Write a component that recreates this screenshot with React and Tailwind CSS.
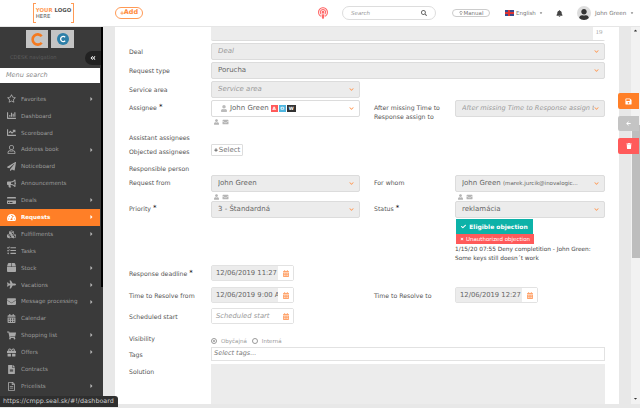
import {
  FaRegStar, FaChartBar, FaChartLine, FaRegUser, FaPaperPlane, FaBullhorn, FaCreditCard,
  FaTachometerAlt, FaCubes, FaTasks, FaBox, FaPlane, FaEnvelope, FaCalendarAlt, FaShoppingCart,
  FaGift, FaFileAlt, FaRegFileAlt, FaCaretRight, FaCaretDown, FaCaretUp, FaSearch, FaBell, FaUser,
  FaChevronDown, FaSave, FaArrowLeft, FaTrash, FaPlus, FaCheck, FaTimes, FaAngleDoubleLeft,
  FaRegLightbulb, FaPodcast,
} from 'react-icons/fa'

const MENU = [
  { label: 'Favorites', icon: FaRegStar, more: true },
  { label: 'Dashboard', icon: FaChartBar },
  { label: 'Scoreboard', icon: FaChartLine },
  { label: 'Address book', icon: FaRegUser, more: true },
  { label: 'Noticeboard', icon: FaPaperPlane },
  { label: 'Announcements', icon: FaBullhorn },
  { label: 'Deals', icon: FaCreditCard, more: true },
  { label: 'Requests', icon: FaTachometerAlt, more: true, active: true },
  { label: 'Fulfillments', icon: FaCubes, more: true },
  { label: 'Tasks', icon: FaTasks },
  { label: 'Stock', icon: FaBox, more: true },
  { label: 'Vacations', icon: FaPlane, more: true },
  { label: 'Message processing', icon: FaEnvelope, more: true },
  { label: 'Calendar', icon: FaCalendarAlt },
  { label: 'Shopping list', icon: FaShoppingCart, more: true },
  { label: 'Offers', icon: FaGift, more: true },
  { label: 'Contracts', icon: FaFileAlt },
  { label: 'Pricelists', icon: FaRegFileAlt, more: true },
]

function MenuItem({ item }) {
  const Icon = item.icon
  return (
    <div className={`h-[16.9px] flex items-center pl-[7px] pr-[6px] text-[5.6px] ${item.active ? 'bg-[#ff7f27] text-white font-semibold' : 'text-[#9c9c9c]'}`}>
      <Icon className={`w-[9px] h-[9px] mr-[5px] shrink-0 ${item.active ? 'text-white' : 'text-[#a8a8a8]'}`} />
      <span className="flex-1 truncate">{item.label}</span>
      {item.more && <FaCaretRight className={`w-[5px] h-[6px] ${item.active ? 'text-white' : 'text-[#b5b5b5]'}`} />}
    </div>
  )
}

function Field({ children, placeholder, className = 'w-[149px]', white }) {
  return (
    <div className={`h-[17px] shrink-0 flex items-center pl-[6px] pr-[5px] rounded-[2px] border border-[#dcdcdc] text-[7px] ${white ? 'bg-white' : 'bg-[#ececec]'} text-[#666] ${className}`}>
      <span className={`flex-1 min-w-0 overflow-hidden whitespace-nowrap ${placeholder ? 'italic text-[#9a9a9a]' : ''}`}>{placeholder || children}</span>
      <FaChevronDown className="w-[5px] h-[5px] text-[#ff9a55] shrink-0" />
    </div>
  )
}

function PersonIcons() {
  return (
    <div className="flex items-center gap-[3px] pl-[3px] mt-[1px] h-[7px] text-[#b5b5b5]">
      <FaUser className="w-[5px] h-[6px]" />
      <FaEnvelope className="w-[7px] h-[6px]" />
    </div>
  )
}

function Label({ children, req, className = 'w-[82px]' }) {
  return (
    <div className={`shrink-0 text-[6.2px] leading-[9px] text-[#555] ${className}`}>
      {children}
      {req && <span className="text-[7px] text-black align-top ml-[2px]">*</span>}
    </div>
  )
}

function DateField({ value, placeholder, className = 'w-[83px]' }) {
  return (
    <div className={`flex h-[16px] shrink-0 border border-[#e2e2e2] rounded-[2px] ${className}`}>
      <div className={`flex-1 min-w-0 overflow-hidden whitespace-nowrap flex items-center pl-[4px] text-[6.8px] ${placeholder ? 'italic text-[#9a9a9a] bg-white' : 'bg-[#ececec] text-[#666]'}`}>
        {placeholder || value}
      </div>
      <div className="w-[15px] flex items-center justify-center bg-white">
        <FaCalendarAlt className="w-[6px] h-[7px] text-[#ffa36b]" />
      </div>
    </div>
  )
}

function Badge({ className, children }) {
  return <span className={`h-[7px] text-white text-[4.5px] font-bold text-center leading-[7px] ${className}`}>{children}</span>
}

export default function App() {
  return (
    <div className="relative w-[640px] h-[408px] overflow-hidden flex flex-col bg-[#e8e8e8] font-['DejaVu_Sans',sans-serif]">
      <header className="h-[27px] shrink-0 flex items-center bg-white border-b border-[#e6e6e6]">
        <div className="ml-[33px] w-[41px] h-[20px] shrink-0 flex">
          <div className="w-[3px] border-l border-y border-[#ff9a55]" />
          <div className="flex-1 text-[5.4px] leading-[6.5px] flex flex-col justify-center text-[#555] font-bold whitespace-nowrap">
            <div><span className="text-[#ff9a55]">YOUR</span> LOGO</div>
            <div className="font-normal">HERE</div>
          </div>
          <div className="w-[3px] border-r border-y border-[#ff9a55]" />
        </div>
        <div className="ml-[41px] w-[28px] h-[12px] shrink-0 flex items-center justify-center border border-[#ff9a55] rounded-full text-[6.5px] font-bold text-[#ff8a3d]">
          <FaPlus className="w-[4px] h-[4px]" />Add
        </div>
        <FaPodcast className="ml-[175px] w-[10px] h-[12px] shrink-0 text-[#ff6b6b]" />
        <div className="ml-[14px] w-[94px] h-[14px] shrink-0 flex items-center px-[8px] border border-[#ddd] rounded-full italic text-[5.5px] text-[#999]">
          <span className="flex-1">Search</span>
          <FaSearch className="w-[6px] h-[6px] text-[#666]" />
        </div>
        <div className="ml-[16px] w-[38px] h-[8px] shrink-0 flex items-center justify-center gap-[1px] border border-[#ccc] rounded-full text-[5.5px] text-[#777]">
          <FaRegLightbulb className="w-[4px] h-[4px]" />Manual
        </div>
        <div className="ml-[15px] w-[9px] h-[6px] shrink-0 bg-[#3b4a8c] relative overflow-hidden">
          <div className="absolute left-0 right-0 top-[2px] h-[2px] bg-[#d33]" />
          <div className="absolute top-0 bottom-0 left-[3px] w-[2px] bg-[#d33]" />
        </div>
        <span className="ml-[2px] w-[22px] shrink-0 text-[5.5px] text-[#777]">English</span>
        <FaCaretDown className="ml-[1px] w-[4px] h-[4px] shrink-0 text-[#555]" />
        <FaBell className="ml-[13px] w-[7px] h-[7px] shrink-0 text-[#444]" />
        <div className="ml-[14px] w-[14px] h-[14px] shrink-0 rounded-full bg-[#ddd] flex items-end justify-center overflow-hidden">
          <FaUser className="w-[10px] h-[11px] text-[#333]" />
        </div>
        <span className="ml-[4px] w-[33px] shrink-0 whitespace-nowrap text-[5.7px] text-[#777]">John Green</span>
        <FaCaretDown className="ml-[2px] w-[4px] h-[4px] shrink-0 text-[#555]" />
      </header>

      <div className="flex-1 min-h-0 flex">
        <aside className="relative w-[103px] shrink-0 bg-[#3a3a3a]">
          <div className="absolute right-0 top-0 w-[2px] h-[260px] bg-black" />
          <div className="flex gap-[3px] pl-[26px] pt-[3px]">
            <div className="w-[22px] h-[18px] bg-[#c4c4c4] flex items-center justify-center">
              <svg viewBox="0 0 14 14" className="w-[13px] h-[13px]">
                <path d="M11.5 3.5 A5.5 5.5 0 1 0 11.5 10.5" fill="none" stroke="#f47a20" strokeWidth="2.8" />
              </svg>
            </div>
            <div className="w-[23px] h-[18px] bg-[#c4c4c4] flex items-center justify-center">
              <svg viewBox="0 0 14 14" className="w-[12px] h-[12px]">
                <circle cx="7" cy="7" r="7" fill="#2d7fa8" />
                <path d="M9.5 5 A3 3 0 1 0 9.5 9" fill="none" stroke="#fff" strokeWidth="1.5" />
              </svg>
            </div>
          </div>
          <div className="h-[14px] mt-[3px] relative flex items-center pl-[10px] text-[5.2px] text-[#5c5c5c]">
            CDESK navigation
            <div className="absolute left-[85px] top-0 w-[16px] h-[14px] rounded-l-full bg-[#222] flex items-center justify-center">
              <FaAngleDoubleLeft className="w-[6px] h-[6px] text-white" />
            </div>
          </div>
          <div className="mt-[3px] w-[100px] h-[15px] bg-white flex items-center pl-[6px] italic text-[6.5px] text-[#888]">Menu search</div>
          <div className="mt-[7.5px] w-[100px]">
            {MENU.map(item => <MenuItem key={item.label} item={item} />)}
          </div>
        </aside>

        <div className="w-[12px] shrink-0" />

        <main className="w-[504px] shrink-0 bg-white pl-[14px] pr-[14px] overflow-hidden">
          <div className="ml-[82px] h-[14px] flex justify-end bg-[#ececec] border-b border-[#dcdcdc] rounded-b-[2px]">
            <div className="w-[12px] bg-white text-[7px] text-[#aaa] text-center font-['Liberation_Serif',serif]">19</div>
          </div>
          <div className="mt-[2px] flex items-center h-[17px]"><Label>Deal</Label><Field placeholder="Deal" className="flex-1" /></div>
          <div className="mt-[2px] flex items-center h-[17px]"><Label>Request type</Label><Field className="flex-1">Porucha</Field></div>
          <div className="mt-[2px] flex items-center h-[17px]"><Label>Service area</Label><Field placeholder="Service area" /></div>

          <div className="mt-[2px] flex h-[25px]">
            <Label req className="w-[82px] pt-[3px]">Assignee</Label>
            <div>
              <Field white>
                <span className="flex items-center">
                  <FaUser className="w-[6px] h-[7px] mx-[3px] text-[#bbb]" />
                  John Green
                  <Badge className="ml-[2px] mr-[1px] w-[7px] bg-[#ff5a5a]">A</Badge>
                  <Badge className="mr-[1px] w-[7px] bg-[#4fb6e0]">O</Badge>
                  <Badge className="w-[9px] bg-[#333]">W</Badge>
                </span>
              </Field>
              <PersonIcons />
            </div>
            <Label className="ml-[14px] w-[81px] pt-[3px]">After missing Time to Response assign to</Label>
            <Field placeholder="After missing Time to Response assign to" className="w-[150px] !text-[6.6px]" />
          </div>

          <div className="mt-[8px] h-[9px]"><Label>Assistant assignees</Label></div>
          <div className="mt-[2px] h-[12px] flex">
            <Label className="w-[82px] pt-[3px]">Objected assignees</Label>
            <div className="w-[32px] h-[12px] flex items-center justify-center border border-[#ddd] rounded-[1px] text-[7px] text-[#777]">
              <FaPlus className="w-[4px] h-[4px] mr-[1px] text-[#444]" />Select
            </div>
          </div>
          <div className="mt-[8px] h-[9px]"><Label>Responsible person</Label></div>

          <div className="mt-[2px] flex h-[25px]">
            <Label className="w-[82px] pt-[3px]">Request from</Label>
            <div><Field>John Green</Field><PersonIcons /></div>
            <Label className="ml-[14px] w-[81px] pt-[3px]">For whom</Label>
            <div>
              <Field className="w-[150px]">John Green <span className="text-[5.5px]">(marek.jurcik@inovalogic...</span></Field>
              <PersonIcons />
            </div>
          </div>

          <div className="mt-[1px] flex h-[64px]">
            <Label req className="w-[82px] pt-[3px]">Priority</Label>
            <Field>3 - Štandardná</Field>
            <Label req className="ml-[14px] w-[81px] pt-[3px]">Status</Label>
            <div>
              <Field className="w-[150px]">reklamácia</Field>
              <div className="mt-[1px] ml-[1px] w-[77px] h-[15px] bg-[#0db2a8] text-white text-[6px] font-bold flex items-center justify-center gap-[3px]">
                <FaCheck className="w-[5px] h-[5px]" />Eligible objection
              </div>
              <div className="ml-[1px] w-[78px] h-[10px] bg-[#ff5a5a] text-white text-[5.5px] flex items-center justify-center gap-[2px]">
                <FaTimes className="w-[4px] h-[4px]" />Unauthorized objection
              </div>
              <div className="mt-[1px] w-[148px] text-[5.8px] leading-[8.5px] text-[#444]">1/15/20 07:55 Deny completition - John Green:<br />Some keys still doesn´t work</div>
            </div>
          </div>

          <div className="flex items-center h-[16px]"><Label req>Response deadline</Label><DateField value="12/06/2019 11:27" /></div>
          <div className="mt-[6px] flex items-center h-[16px]">
            <Label>Time to Resolve from</Label>
            <DateField value="12/06/2019 9:00 AM" />
            <Label className="ml-[80px] w-[81px]">Time to Resolve to</Label>
            <DateField value="12/06/2019 12:27" />
          </div>
          <div className="mt-[5px] flex items-center h-[16px]"><Label>Scheduled start</Label><DateField placeholder="Scheduled start" /></div>

          <div className="mt-[8px] flex h-[12px]">
            <Label className="w-[82px] pt-[2px]">Visibility</Label>
            <div className="flex items-center text-[5.5px] text-[#999] pt-[6px]">
              <span className="w-[6px] h-[6px] rounded-full border border-[#999] mr-[4px] flex items-center justify-center"><span className="w-[2px] h-[2px] rounded-full bg-[#999]" /></span>
              Obyčajná
              <span className="w-[6px] h-[6px] rounded-full border border-[#999] ml-[5px] mr-[4px]" />
              Interná
            </div>
          </div>
          <div className="mt-[3px] flex items-center h-[14px]">
            <Label>Tags</Label>
            <div className="flex-1 h-[14px] flex items-center pl-[2px] border border-[#e2e2e2] italic text-[6.5px] text-[#777]">Select tags...</div>
          </div>
          <div className="mt-[3px] flex">
            <Label className="w-[82px] pt-[3px]">Solution</Label>
            <div className="flex-1 h-[40px] bg-[#ececec]" />
          </div>
        </main>

        <div className="w-[12px] shrink-0" />

        <div className="w-[9px] shrink-0 bg-[#f2f2f2] flex flex-col items-center justify-between pt-[1px] pb-[3px]">
          <FaCaretUp className="w-[5px] h-[5px] text-[#333]" />
          <FaCaretDown className="w-[5px] h-[5px] text-[#333]" />
        </div>
      </div>
      <div className="h-[4px] shrink-0" />

      <div className="absolute left-[632px] top-[125px] w-[8px] h-[133px] bg-[#bdbdbd]" />
      <div className="absolute left-[618px] top-[93px] w-[21px] h-[16px] bg-[#ff7f27] rounded-l-[2px] flex items-center justify-center">
        <FaSave className="w-[7px] h-[7px] text-white" />
      </div>
      <div className="absolute left-[618px] top-[116px] w-[21px] h-[15px] bg-[#c4c4c4] rounded-l-[2px] flex items-center justify-center">
        <FaArrowLeft className="w-[7px] h-[5px] text-white" />
      </div>
      <div className="absolute left-[618px] top-[138px] w-[21px] h-[16px] bg-[#ff5a5a] rounded-l-[2px] flex items-center justify-center">
        <FaTrash className="w-[6px] h-[6px] text-white" />
      </div>

      <div className="absolute left-0 top-[396px] w-[118px] h-[11px] bg-[#2f2f2f] rounded-tr-[3px] flex items-center pl-[3px] text-[6.4px] text-[#ccc] whitespace-nowrap">
        https://cmpp.seal.sk/#!/dashboard
      </div>
    </div>
  )
}
